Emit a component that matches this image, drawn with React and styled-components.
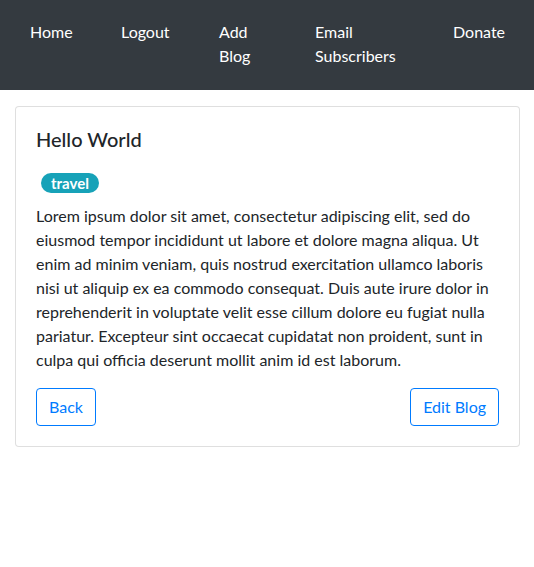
import React from 'react';
import styled, { createGlobalStyle } from 'styled-components';

const GlobalStyle = createGlobalStyle`
  body {
    margin: 0;
    font-family: "Segoe UI", Lato, "Noto Sans", sans-serif;
    font-size: 16px;
    line-height: 1.5;
    color: #212529;
    background: #fff;
  }
  * { box-sizing: border-box; }
`;

const links = [
  { label: 'Home', width: 91 },
  { label: 'Logout', width: 98 },
  { label: 'Add Blog', width: 96 },
  { label: 'Email Subscribers', width: 138 },
  { label: 'Donate' },
];

const text =
  'Lorem ipsum dolor sit amet, consectetur adipiscing elit, sed do eiusmod tempor incididunt ut labore et dolore magna aliqua. Ut enim ad minim veniam, quis nostrud exercitation ullamco laboris nisi ut aliquip ex ea commodo consequat. Duis aute irure dolor in reprehenderit in voluptate velit esse cillum dolore eu fugiat nulla pariatur. Excepteur sint occaecat cupidatat non proident, sunt in culpa qui officia deserunt mollit anim id est laborum.';

export default function App() {
  return (
    <>
      <GlobalStyle />
      <Navbar>
        {links.map((l) => (
          <NavLink key={l.label} $width={l.width}>
            {l.label}
          </NavLink>
        ))}
      </Navbar>
      <Page>
        <Card>
          <Title>Hello World</Title>
          <Tags>
            <Badge>travel</Badge>
          </Tags>
          <Body>{text}</Body>
          <Actions>
            <OutlineButton>Back</OutlineButton>
            <OutlineButton>Edit Blog</OutlineButton>
          </Actions>
        </Card>
      </Page>
    </>
  );
}

const Navbar = styled.nav`
  display: flex;
  align-items: flex-start;
  height: 90px;
  padding: 20px 0 0 6px;
  background-color: #343a40;
`;

const NavLink = styled.a`
  flex: none;
  width: ${(p) => (p.$width ? `${p.$width}px` : 'auto')};
  padding: 0 24px;
  color: #fff;
  text-decoration: none;
  cursor: pointer;
`;

const Page = styled.main`
  padding: 16px 14px 0 15px;
`;

const Card = styled.div`
  display: flex;
  flex-direction: column;
  padding: 20px;
  border: 1px solid rgba(0, 0, 0, 0.125);
  border-radius: 4px;
  background: #fff;
`;

const Title = styled.h5`
  margin: 0 0 12px;
  font-size: 20px;
  font-weight: 500;
  line-height: 1.2;
`;

const Tags = styled.div`
  display: flex;
  height: 41px;
  padding: 10px 0 0 5px;
`;

const Badge = styled.span`
  display: inline-block;
  height: 20px;
  padding: 0 10px;
  border-radius: 10px;
  background-color: #17a2b8;
  color: #fff;
  font-size: 15px;
  font-weight: 700;
  line-height: 20px;
`;

const Body = styled.p`
  margin: 0 0 16px;
`;

const Actions = styled.div`
  display: flex;
  justify-content: space-between;
`;

const OutlineButton = styled.button`
  height: 38px;
  padding: 6px 12px;
  border: 1px solid #007bff;
  border-radius: 4px;
  background: transparent;
  color: #007bff;
  font-family: inherit;
  font-size: 16px;
  line-height: 24px;
  cursor: pointer;
`;
